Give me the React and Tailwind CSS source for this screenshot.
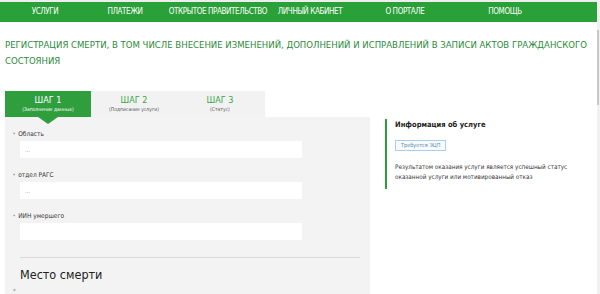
import React from "react";

const navItems = [
  { label: "УСЛУГИ", w: "w-[90px]" },
  { label: "ПЛАТЕЖИ", w: "w-[70px]" },
  { label: "ОТКРЫТОЕ ПРАВИТЕЛЬСТВО", w: "w-[116px]" },
  { label: "ЛИЧНЫЙ КАБИНЕТ", w: "w-[68px]" },
  { label: "О ПОРТАЛЕ", w: "w-[122px]" },
  { label: "ПОМОЩЬ", w: "w-[78px]" },
];

const steps = [
  { title: "ШАГ 1", sub: "(Заполнение данных)", active: true },
  { title: "ШАГ 2", sub: "(Подписание услуги)" },
  { title: "ШАГ 3", sub: "(Статус)" },
];

const fields = [
  { label: "Область", value: "..." },
  { label: "отдел РАГС", value: "..." },
  { label: "ИИН умершего", value: "" },
];

const Field = ({ label, value }) => (
  <div className="mb-[12px]">
    <div className="flex items-start text-[6.5px] text-[#333] leading-[10px] pl-[8px]">
      <span className="text-[5px] mr-[3px] text-[#777]">*</span>
      {label}
    </div>
    <div className="ml-[15px] mt-[2px] w-[282px] h-[17px] bg-white flex items-center px-[5px] text-[6px] text-[#999]">
      {value}
    </div>
  </div>
);

export default function App() {
  return (
    <div
      className="w-[600px] h-[294px] overflow-hidden bg-white relative"
      style={{ fontFamily: "'DejaVu Sans Condensed', Roboto, sans-serif" }}
    >
      <div className="h-[2px] bg-[#eeeeee]" />
      <nav className="h-[20px] w-[597px] bg-[#2aa038] flex items-center">
        {navItems.map((n) => (
          <div
            key={n.label}
            className={`${n.w} shrink-0 whitespace-nowrap text-center text-white text-[8px] tracking-[-0.4px]`}
          >
            {n.label}
          </div>
        ))}
      </nav>
      <div className="absolute right-0 top-0 w-[3px] h-[294px] bg-[#f1f1f1]">
        <div className="mt-[30px] h-[75px] w-[2px] bg-[#c8c8c8]" />
      </div>

      <h1 className="px-[5px] pt-[15px] text-[9.5px] leading-[16px] text-[#2b8a3a] font-normal uppercase max-w-[595px]">
        Регистрация смерти, в том числе внесение изменений, дополнений и
        исправлений в записи актов гражданского
        <br />
        состояния
      </h1>

      <div className="flex mt-[22px]">
        <div className="w-[365px] ml-[5px] shrink-0">
          <div className="flex w-[260px] h-[26px] bg-[#f2f2f2]">
            {steps.map((s) => (
              <div
                key={s.title}
                className={`relative w-[86px] flex flex-col items-center justify-center ${
                  s.active ? "bg-[#2f9e3d] text-white" : "text-[#3aa646]"
                }`}
              >
                <div className="text-[9px] leading-[11px]">{s.title}</div>
                <div
                  className={`text-[5px] leading-[7px] ${
                    s.active ? "text-white" : "text-[#555]"
                  }`}
                >
                  {s.sub}
                </div>
                {s.active && (
                  <div className="absolute left-1/2 -translate-x-1/2 top-[26px] w-0 h-0 border-l-[10px] border-r-[10px] border-t-[7px] border-l-transparent border-r-transparent border-t-[#2f9e3d]" />
                )}
              </div>
            ))}
          </div>
          <div className="bg-[#f3f3f3] h-[200px] pt-[12px]">
            {fields.map((f) => (
              <Field key={f.label} {...f} />
            ))}
            <div className="ml-[15px] mr-[10px] mt-[17px] border-t border-[#d9d9d9]" />
            <div className="ml-[15px] mt-[8px] text-[12.5px] leading-[18px] text-[#222]">Место смерти</div>
            <div className="pl-[8px] text-[6px] text-[#777] mt-[2px]">*</div>
          </div>
        </div>

        <div className="ml-[15px] mt-[28px] w-[200px] h-[70px] border-l-2 border-[#2aa038] pl-[8px] pt-[1px]">
          <div className="text-[7.5px] leading-[10px] font-bold text-[#222]">Информация об услуге</div>
          <div className="mt-[6px] inline-block border border-[#a9cfe8] bg-[#f6fbff] px-[5px] py-[1px] text-[5.5px] leading-[7px] text-[#6a8aa0]">
            Требуется ЭЦП
          </div>
          <div className="mt-[8px] text-[6.3px] leading-[10px] text-[#333]">
            Результатом оказания услуги является успешный статус
            <br />
            оказанной услуги или мотивированный отказ
          </div>
        </div>
      </div>
    </div>
  );
}
